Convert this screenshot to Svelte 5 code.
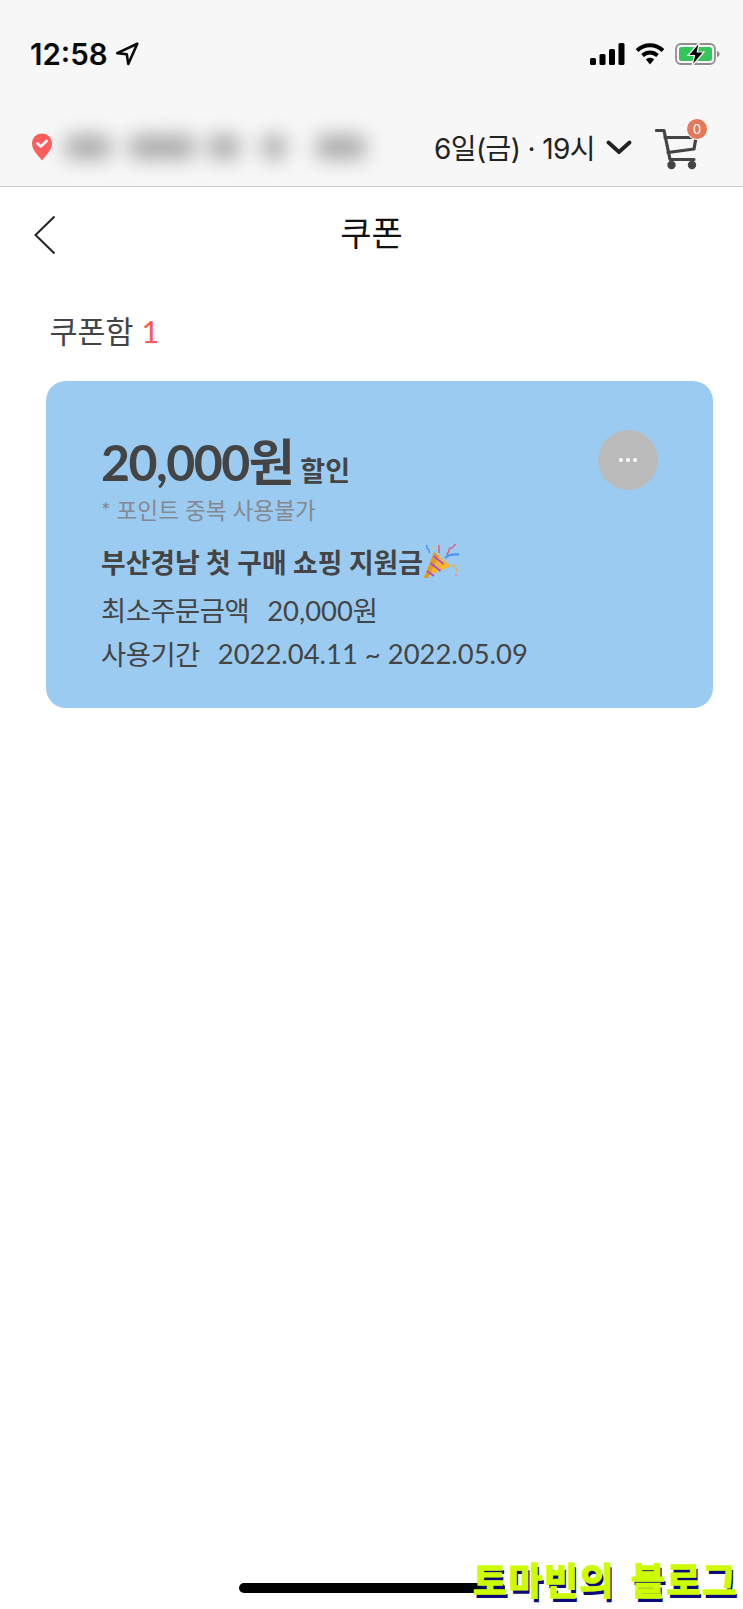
<script>
  const coupon = {
    amount: '20,000원',
    note: '* 포인트 중복 사용불가',
    title: '부산경남 첫 구매 쇼핑 지원금',
    minOrder: '20,000원',
    period: '2022.04.11 ~ 2022.05.09'
  };
  const blurBlobs = [
    { w: 46, gap: 18 },
    { w: 66, gap: 13 },
    { w: 32, gap: 22 },
    { w: 24, gap: 30 },
    { w: 50, gap: 0 }
  ];
</script>

<div class="page">
  <div class="top">
    <div class="status">
      <div class="time">
        <span>12:58</span>
        <svg width="26" height="26" viewBox="0 0 24 24"><path d="M21.500 2.500 3 11.200l8.800 1 1.400 9z" fill="none" stroke="#0b0b0b" stroke-width="2.400" stroke-linejoin="round"/></svg>
      </div>
      <div class="indicators">
        <svg width="35" height="22" viewBox="0 0 35 22" fill="#000">
          <rect x="0" y="15" width="6" height="7" rx="1.600"/>
          <rect x="9.500" y="11" width="6" height="11" rx="1.600"/>
          <rect x="19" y="6" width="6" height="16" rx="1.600"/>
          <rect x="28.500" y="0" width="6" height="22" rx="1.600"/>
        </svg>
        <svg width="30" height="22" viewBox="0 0 30 22">
          <path d="M2 7.500C9.500.5 20.500.5 28 7.500" fill="none" stroke="#000" stroke-width="3.800"/>
          <path d="M7.500 12.500c4.500-4 10.500-4 15 0" fill="none" stroke="#000" stroke-width="3.800"/>
          <path d="M10.800 16.200c2.600-2.100 5.800-2.100 8.400 0L15 21.500z" fill="#000"/>
        </svg>
        <svg width="46" height="24" viewBox="0 0 46 24">
          <rect x="1" y="2" width="39" height="20" rx="5" fill="none" stroke="#8e8e8e" stroke-width="1.800"/>
          <rect x="4" y="5" width="33" height="14" rx="2.500" fill="#33c759"/>
          <path d="M42 9c1.800.5 2.500 1.500 2.500 3s-.7 2.500-2.500 3z" fill="#8e8e8e"/>
          <path d="M24.500 0 13 13.500h6.500L17 24l12-14h-6.700z" fill="#000" stroke="#f7f7f7" stroke-width="1.200"/>
        </svg>
      </div>
    </div>

    <header class="bar">
      <svg class="pin" width="22" height="28" viewBox="0 0 22 28">
        <path d="M11 27.500C8 23 1 17.500 1 10.500 1 4.800 5.500.5 11 .5s10 4.300 10 10c0 7-7 12.500-10 17z" fill="#ff5c5c"/>
        <path d="m6.500 10.500 3.200 3 6-5.500" fill="none" stroke="#fff" stroke-width="2.600" stroke-linecap="round" stroke-linejoin="round"/>
      </svg>
      <div class="address">
        {#each blurBlobs as b}
          <span class="blob" style="width: {b.w}px; margin-right: {b.gap}px"></span>
        {/each}
      </div>
      <div class="slot">6일(금) · 19시</div>
      <svg class="chev" width="26" height="15" viewBox="0 0 26 15"><path d="m2.500 2.500 10.500 9.500 10.500-9.500" fill="none" stroke="#222" stroke-width="3.800" stroke-linecap="round" stroke-linejoin="round"/></svg>
      <div class="cart">
        <svg width="44" height="42" viewBox="0 0 44 42" fill="none" stroke="#444" stroke-width="3.200" stroke-linecap="round" stroke-linejoin="round">
          <path d="M1.500 2.500h7.500l6 29h24"/>
          <path d="M10 9.500h31l-2 11.500-26 3.500"/>
          <circle cx="16.500" cy="37" r="2.600" fill="#444"/>
          <circle cx="37" cy="37" r="2.600" fill="#444"/>
        </svg>
        <span class="badge">0</span>
      </div>
    </header>
  </div>

  <div class="title-row">
    <button class="back" aria-label="뒤로">
      <svg width="24" height="40" viewBox="0 0 24 40"><path d="M21.500 1.500 2.500 20l19 18.500" fill="none" stroke="#222" stroke-width="2"/></svg>
    </button>
    <h1>쿠폰</h1>
  </div>

  <main class="content">
    <h2>쿠폰함 <em>1</em></h2>

    <section class="card">
      <div class="head">
        <div>
          <div class="amount"><strong>{coupon.amount}</strong> <span>할인</span></div>
          <div class="note">{coupon.note}</div>
        </div>
        <button class="more" aria-label="더보기"><i></i><i></i><i></i></button>
      </div>
      <div class="name">
        {coupon.title}<svg width="38" height="38" viewBox="0 0 38 38">
          <path d="M1 36 11 10l17 14z" fill="#f2b632"/>
          <path d="M1 36 11 10l5 4L5 36z" fill="#e39a1f"/>
          <path d="m4 29 7 5M7.500 21l10 8M10.500 14l10 8" stroke="#b04fd0" stroke-width="2" fill="none"/>
          <path d="M22 16c4-4 9-4 14-3.500" stroke="#4f94f5" stroke-width="2.400" fill="none"/>
          <path d="M16 11c1-3-1-5 0-8M24 13c0-3 2-2 2-5s3-1 4-3 2-2 3-3" stroke="#e8577f" stroke-width="1.500" fill="none"/>
          <path d="M3 3c2 1 0 3 2 4s0 3 2 4" stroke="#4f94f5" stroke-width="1.500" fill="none"/>
          <circle cx="31" cy="24" r="1.500" fill="#f0b040"/>
          <circle cx="34" cy="28" r="1.300" fill="#f0b040"/>
          <circle cx="33" cy="33" r="1.300" fill="#e98ab8"/>
          <circle cx="10" cy="6" r="1.100" fill="#f0c040"/>
        </svg>
      </div>
      <div class="line"><span class="label">최소주문금액</span><span>{coupon.minOrder}</span></div>
      <div class="line"><span class="label">사용기간</span><span>{coupon.period}</span></div>
    </section>
  </main>

  <div class="home"></div>
  <div class="mark">토마빈의 블로그</div>
</div>

<style>
  :global(body) { margin: 0; background: #fff; }
  .page { position: relative; height: 1609px; overflow: hidden; font-family: Lato, "Noto Sans CJK KR", sans-serif; color: #444; }
  .top { background: #f7f7f7; border-bottom: 1px solid #c9c9c9; }
  .status { display: flex; justify-content: space-between; align-items: center; height: 108px; padding: 0 22px 0 30px; box-sizing: border-box; }
  .time { display: flex; align-items: center; gap: 6px; font: 600 29.500px Inter, sans-serif; color: #0b0b0b; }
  .indicators { display: flex; align-items: center; gap: 10px; }
  .bar { display: flex; align-items: center; height: 78px; padding: 0 0 0 31px; }
  .pin { flex: none; }
  .address { display: flex; flex: 1; align-items: center; padding-left: 12px; filter: blur(10px); }
  .blob { height: 24px; background: #a8a8a8; border-radius: 8px; }
  .slot { font: 400 28px Inter, "Noto Sans CJK KR", sans-serif; color: #222; letter-spacing: -0.600px; }
  .chev { margin-left: 11px; flex: none; }
  .cart { position: relative; flex: none; margin: 3px 44px 0 23px; height: 42px; }
  .badge { position: absolute; right: -9px; top: -10px; width: 20px; height: 20px; border-radius: 50%; background: #e5775a; border: 1.500px solid #fff; color: #fff; font: 400 13px/20px Lato, sans-serif; text-align: center; }
  .title-row { position: relative; display: flex; justify-content: center; align-items: center; height: 96px; }
  h1 { margin: 0 0 8px; font: 400 34px "Noto Sans CJK KR", sans-serif; color: #111; }
  .back { position: absolute; left: 33px; top: 28px; padding: 0; border: 0; background: none; }
  .content { padding: 25px 30px 0 45.500px; }
  h2 { margin: 0 0 27px 4px; font: 400 30.500px/46px Lato, "Noto Sans CJK KR", sans-serif; }
  h2 em { font-style: normal; color: #ff5a52; }
  .card { box-sizing: border-box; height: 327px; padding: 48px 55px 0 55.500px; background: #9bcbf0; border-radius: 20px; }
  .head { display: flex; justify-content: space-between; align-items: flex-start; }
  .amount { line-height: 66px; height: 66px; }
  .amount strong { font-size: 50px; font-weight: 700; letter-spacing: -1.500px; }
  .amount span { font-size: 27px; font-weight: 700; margin-left: 3px; }
  .note { font-size: 22.700px; line-height: 30px; color: #84898f; margin-top: 1px; }
  .more { display: flex; justify-content: center; align-items: center; gap: 3px; width: 60px; height: 60px; margin: 1px 0 0; padding: 0; border: 0; border-radius: 50%; background: #bbb; }
  .more i { width: 4px; height: 4px; border-radius: 50%; background: #fff; }
  .name { display: flex; align-items: center; height: 42px; margin: 14px 0 5px; font-size: 26.800px; font-weight: 700; }
  .line { display: flex; gap: 18px; height: 44px; align-items: center; font-size: 27.400px; }
  .label { letter-spacing: -0.500px; }
  .home { position: absolute; left: 239px; top: 1583px; width: 266px; height: 10px; border-radius: 5px; background: #000; }
  .mark { position: absolute; left: 473px; top: 1555px; font: 700 37px/48px "Noto Sans CJK KR", sans-serif; white-space: nowrap; color: #cdfb00; -webkit-text-stroke: 1.500px #cdfb00; text-shadow: 2px 4px 0 #0a0a78; letter-spacing: 1.500px; word-spacing: 6px; }
</style>
